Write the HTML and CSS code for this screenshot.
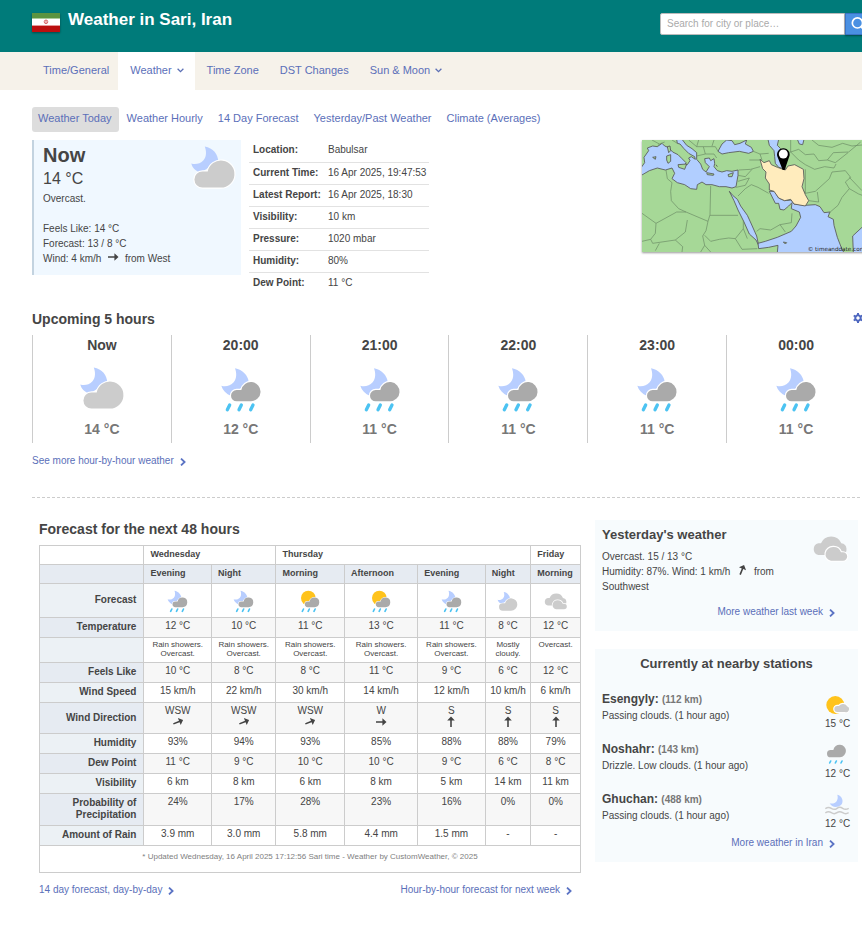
FILE: index.html
```html
<!DOCTYPE html>
<html lang="en">
<head>
<meta charset="utf-8">
<title>Weather in Sari, Iran</title>
<meta name="viewport" content="width=device-width, initial-scale=1">
<link rel="stylesheet" href="styles.css">
</head>
<body>
<svg class="sprite" aria-hidden="true">
  <defs>
    <symbol id="moon-cloud" viewBox="0 0 140 136">
      <path fill="#b8ceff" d="M45 4C70 8 86 28 86 50L32 84C16 78 7 69 4 56C16 60 31 57 41 46C51 34 50 18 45 4Z"/>
      <path class="cloud" fill="#ccc" d="M38 129A24.5 24.5 0 0 1 38 80H54A41 41 0 1 1 94 129Z"/>
    </symbol>
    <symbol id="moon-rain" viewBox="0 0 126 138">
      <path fill="#b8ceff" d="M45 4C68 8 84 26 86 44L34 87C18 80 8 70 4 56C16 60 31 57 41 46C51 34 50 18 45 4Z"/>
      <path class="cloud" fill="#aaa" d="M50 103A17 17 0 0 1 50 69H64A29 29 0 1 1 93 103Z"/>
      <path class="drops" d="M29 114L22 128M64 114L57 128M99 114L92 128"/>
    </symbol>
    <symbol id="sun-rain" viewBox="0 0 126 138">
      <circle cx="50" cy="48" r="44" fill="#ffc31c"/>
      <path class="cloud" fill="#aaa" d="M46 103A17 17 0 0 1 46 69H58A29 29 0 1 1 87 103Z"/>
      <path class="drops" d="M21 114L14 128M56 114L49 128M91 114L84 128"/>
    </symbol>
    <symbol id="overcast" viewBox="0 0 114 90">
      <path fill="#ccc" d="M22 66A18 18 0 0 1 22 31H30A33 33 0 0 1 91 31A18 18 0 0 1 94 66Z"/>
      <path class="cloud" fill="#ccc" d="M60 83A19 19 0 0 1 44 60A24 24 0 0 1 90 58H96A12.500 12.500 0 0 1 96 83Z"/>
    </symbol>
    <symbol id="sun-cloud" viewBox="0 0 72 60">
      <circle cx="31" cy="30" r="27" fill="#ffc31c"/>
      <path class="cloud" fill="#ccc" d="M37 51A9 9 0 0 1 37 33H42A14 14 0 0 1 66 34A9 9 0 0 1 60 51Z"/>
    </symbol>
    <symbol id="drizzle" viewBox="0 0 72 66">
      <path fill="#aaa" d="M17 40A11 11 0 0 1 17 18H25A19 19 0 1 1 45 40Z"/>
      <path class="drops small" d="M17 51L14 57M34 51L31 57M51 51L48 57"/>
    </symbol>
    <symbol id="moon-fog" viewBox="0 0 72 66">
      <path fill="#b8ceff" d="M37 2C51 5 58 22 48 33C38 42 20 41 14 28C30 32 42 20 37 2Z"/>
      <path fill="none" stroke="#ccc" stroke-width="4.500" d="M1 44Q10 37 19 43T36 43T53 43T71 43M1 57Q10 50 19 56T36 56T53 56T71 56"/>
    </symbol>
    <symbol id="arrow" viewBox="0 0 12 12"><path fill="#444" d="M1 5.200H7.400V2.200L11.500 6L7.400 9.800V6.800H1Z"/></symbol>
    <symbol id="chevron" viewBox="0 0 6 8"><path fill="none" stroke="#5b73c4" stroke-width="1.800" d="M1 .6L4.600 4L1 7.400"/></symbol>
    <symbol id="caret" viewBox="0 0 7 5"><path fill="none" stroke="#5b6fb5" stroke-width="1.300" d="M.6 .8L3.500 3.600L6.400 .8"/></symbol>
  </defs>
</svg>

<header class="banner">
  <div class="banner-title">
    <svg class="flag" viewBox="0 0 28 19" role="img" aria-label="Flag of Iran">
      <path fill="#fff" d="M0 0H28V19H0Z"/><path fill="#5b9440" d="M0 0H28V5H0Z"/><path fill="#bb0f0f" d="M0 12H28V19H0Z"/>
      <path fill="#a9cc9c" d="M0 5H28V6H0Z"/><path fill="#e49a9a" d="M0 12H28V13H0Z"/>
      <circle cx="14" cy="8.800" r="1.800" fill="none" stroke="#d9686a"/><path stroke="#d9686a" d="M14 7V11"/>
    </svg>
    <h1>Weather in Sari, Iran</h1>
  </div>
  <form class="search">
    <input type="text" aria-label="Search for city or place" placeholder="Search for city or place…">
    <button type="button" aria-label="Search"><svg viewBox="0 0 16 16"><circle cx="7" cy="6.500" r="4.800" fill="none" stroke="#fff" stroke-width="1.600"/><path stroke="#fff" stroke-width="2" d="M10.500 10L14 13.500"/></svg></button>
  </form>
</header>

<nav class="tabs">
  <a href="#">Time/General</a>
  <a href="#" class="active has-menu">Weather<svg class="caret"><use href="#caret"/></svg></a>
  <a href="#">Time Zone</a>
  <a href="#">DST Changes</a>
  <a href="#" class="has-menu">Sun &amp; Moon<svg class="caret"><use href="#caret"/></svg></a>
</nav>

<main class="page">
  <nav class="subtabs">
    <a href="#" class="current">Weather Today</a>
    <a href="#">Weather Hourly</a>
    <a href="#">14 Day Forecast</a>
    <a href="#">Yesterday/Past Weather</a>
    <a href="#">Climate (Averages)</a>
  </nav>

  <section class="summary">
    <div class="now">
      <div>
        <h2>Now</h2>
        <div class="now-temp">14 °C</div>
        <p>Overcast.</p>
        <p class="now-details">Feels Like: 14 °C<br>Forecast: 13 / 8 °C<br>Wind: 4 km/h <svg class="arrow inline"><use href="#arrow"/></svg> from West</p>
      </div>
      <svg class="now-icon"><use href="#moon-cloud"/></svg>
    </div>
    <table class="facts">
      <tr><th scope="row">Location:</th><td>Babulsar</td></tr>
      <tr><th scope="row">Current Time:</th><td>16 Apr 2025, 19:47:53</td></tr>
      <tr><th scope="row">Latest Report:</th><td>16 Apr 2025, 18:30</td></tr>
      <tr><th scope="row">Visibility:</th><td>10 km</td></tr>
      <tr><th scope="row">Pressure:</th><td>1020 mbar</td></tr>
      <tr><th scope="row">Humidity:</th><td>80%</td></tr>
      <tr><th scope="row">Dew Point:</th><td>11 °C</td></tr>
    </table>
    <svg class="map" viewBox="30 24 672 336" role="img" aria-label="Location of Sari, Iran">
      <path fill="#a6d897" d="M30 24H702V360H30Z"/>
      <g fill="#b1ceff" stroke="#555" stroke-width="2.500" stroke-linejoin="round">
        <path d="M28 106L38 92L36 76L50 56L46 48L62 42L76 44L90 34L98 42L108 46L122 60L138 68L150 80L162 92L158 100L166 98L174 86L170 78L178 74L190 82L188 74L170 64L156 50L144 36L136 34L134 22H150L164 40L180 50L194 62L194 82L206 96L212 112L222 120L232 104L220 92L218 80L232 78L236 86L246 80L248 94L246 104L256 116L270 120L284 116L300 118L318 114V130L312 164L300 168L282 164L262 164L240 158L222 158L210 150L196 158L194 172L176 170L158 158L136 152L120 140L128 124L120 108L100 114L76 108L52 116L28 130Z"/>
        <path d="M258 58L270 36L284 24L300 26L308 38L324 34L344 24L340 36L358 46L364 58L350 64L322 58L290 62L270 66Z"/>
        <path d="M408 22L412 40L426 56L428 74L430 94L440 106L460 112L456 94L450 76L440 60L446 50L436 40L440 22Z"/>
        <path d="M496 22L502 36L512 38L516 22Z"/>
        <path d="M302 190L316 202L326 222L346 250L358 276L374 312L380 340L372 324L352 306L336 270L318 234L306 206L292 178Z"/>
        <path d="M378 334L400 328L436 316L478 298L492 282L506 256L502 240L478 230L480 212L470 222L456 234L444 232L440 214L430 214L412 178L428 178L440 198L458 206L478 204L486 216L520 220L550 218L564 224L576 242L594 240L588 254L604 262L606 280L616 316L630 352L636 362H436L438 340L410 346L380 350Z"/>
        <path d="M704 276L690 286L662 312L664 362H704Z"/>
      </g>
      <g fill="#a6d897" stroke="#555" stroke-width="2.500">
        <path d="M106 44L114 42L116 56L110 62ZM104 72L116 68L116 88L108 94L104 84ZM138 98L164 96L158 112L140 106ZM224 122L246 126L244 130L226 128ZM288 128L304 122L300 134L290 134ZM62 76L72 74L70 82ZM454 330L464 332L460 336ZM252 98L256 104"/>
      </g>
      <path fill="none" stroke="#6a8a63" stroke-width="2" stroke-linejoin="round" d="M102 114L106 140L120 152L116 178L118 206L140 230L162 240L228 268L234 248L236 162M234 250H318M30 244L72 274L134 240L162 240M72 274L70 304L56 322L62 334L130 324L160 300L166 264M56 322L30 328M70 356L82 334M130 324L152 344L150 360M228 268L222 296L212 312L218 340L206 360M218 310L236 328L262 322L290 318L310 320L334 290L334 266M334 290L346 320M310 320L330 352L376 350M218 340L236 360M320 114L356 112L384 104M318 130L340 134L360 112M312 166L340 160L352 138L318 148M318 192L340 170L358 158L378 166L410 184M374 298L384 290L416 294L444 278L478 272L480 244M444 278L460 300M352 84L388 84M364 58L384 66L410 64M384 66L390 84M200 24L194 44L214 44L220 66L194 72M214 44L250 44L258 58M220 66L246 66L254 78M170 24L194 44M60 24L82 36L98 30M82 36L76 44M246 24L240 42M120 24L136 34M452 64L476 60L500 52L520 68L546 66L560 86L586 84L610 92M476 24V60M476 60L500 84L520 98L548 112L578 104L606 108L612 96M520 112L520 184L550 178L570 160L592 140L600 120L640 116M530 206L560 210L556 180M512 172L520 184M540 24L560 40L600 46L632 34L660 42L700 38M586 84L604 62L650 60L686 30M610 92L648 62M640 116L656 136L640 150L652 170L630 196L618 220L590 244M652 136L690 176L702 172M652 170L680 186L702 194"/>
      <path fill="#ffecbd" stroke="#555" stroke-width="2.500" stroke-linejoin="round" d="M384 82L396 92L412 86L418 98L436 106L460 114L468 102L488 98L514 112L516 140L510 164L520 188L530 206L520 222L486 216L476 202L458 206L440 198L426 178L412 174L412 156L400 138L402 120L392 110Z"/>
      <path d="M452 114L437 76A19 19 0 1 1 471 76L458 114Z"/><circle cx="454" cy="66" r="13.500" fill="#fff"/>
      <text x="527" y="357" class="map-credit">© timeanddate.com</text>
    </svg>
  </section>

  <section class="upcoming">
    <div class="section-head">
      <h2>Upcoming 5 hours</h2>
      <button type="button" class="gear" aria-label="Settings"><svg viewBox="0 0 10 10"><path fill="none" stroke="#4f68c0" stroke-width="2" d="M5 2.300A2.700 2.700 0 1 1 4.990 2.300Z"/><path stroke="#4f68c0" stroke-width="2" d="M5 0V2M5 8V10M.7 2.500L2.400 3.500M7.600 6.500L9.300 7.500M.7 7.500L2.400 6.500M7.600 3.500L9.300 2.500"/></svg></button>
    </div>
    <div class="hours">
      <div class="hour"><h3>Now</h3><svg class="big-cloud"><use href="#moon-cloud"/></svg><span>14 °C</span></div>
      <div class="hour"><h3>20:00</h3><svg><use href="#moon-rain"/></svg><span>12 °C</span></div>
      <div class="hour"><h3>21:00</h3><svg><use href="#moon-rain"/></svg><span>11 °C</span></div>
      <div class="hour"><h3>22:00</h3><svg><use href="#moon-rain"/></svg><span>11 °C</span></div>
      <div class="hour"><h3>23:00</h3><svg><use href="#moon-rain"/></svg><span>11 °C</span></div>
      <div class="hour"><h3>00:00</h3><svg><use href="#moon-rain"/></svg><span>11 °C</span></div>
    </div>
    <a class="more" href="#">See more hour-by-hour weather<svg><use href="#chevron"/></svg></a>
  </section>

  <div class="columns">
    <section class="forecast">
      <h2>Forecast for the next 48 hours</h2>
      <table class="grid">
        <colgroup><col class="w-label"><col class="w-a"><col class="w-b"><col class="w-c"><col class="w-d"><col class="w-a"><col class="w-e"><col class="w-f"></colgroup>
        <thead>
          <tr class="days"><td></td><th colspan="2">Wednesday</th><th colspan="4">Thursday</th><th>Friday</th></tr>
          <tr class="parts"><td></td><th>Evening</th><th>Night</th><th>Morning</th><th>Afternoon</th><th>Evening</th><th>Night</th><th>Morning</th></tr>
        </thead>
        <tbody>
          <tr class="icons"><th scope="row">Forecast</th><td><svg><use href="#moon-rain"/></svg></td><td><svg><use href="#moon-rain"/></svg></td><td><svg><use href="#sun-rain"/></svg></td><td><svg><use href="#sun-rain"/></svg></td><td><svg><use href="#moon-rain"/></svg></td><td><svg><use href="#moon-cloud"/></svg></td><td><svg class="wide"><use href="#overcast"/></svg></td></tr>
          <tr><th scope="row">Temperature</th><td>12 °C</td><td>10 °C</td><td>11 °C</td><td>13 °C</td><td>11 °C</td><td>8 °C</td><td>12 °C</td></tr>
          <tr class="desc"><th scope="row" aria-label="Description"></th><td>Rain showers. Overcast.</td><td>Rain showers. Overcast.</td><td>Rain showers. Overcast.</td><td>Rain showers. Overcast.</td><td>Rain showers. Overcast.</td><td>Mostly cloudy.</td><td>Overcast.</td></tr>
          <tr><th scope="row">Feels Like</th><td>10 °C</td><td>8 °C</td><td>8 °C</td><td>11 °C</td><td>9 °C</td><td>6 °C</td><td>12 °C</td></tr>
          <tr><th scope="row">Wind Speed</th><td>15 km/h</td><td>22 km/h</td><td>30 km/h</td><td>14 km/h</td><td>12 km/h</td><td>10 km/h</td><td>6 km/h</td></tr>
          <tr class="wind"><th scope="row">Wind Direction</th><td>WSW<svg class="arrow wsw"><use href="#arrow"/></svg></td><td>WSW<svg class="arrow wsw"><use href="#arrow"/></svg></td><td>WSW<svg class="arrow wsw"><use href="#arrow"/></svg></td><td>W<svg class="arrow"><use href="#arrow"/></svg></td><td>S<svg class="arrow s"><use href="#arrow"/></svg></td><td>S<svg class="arrow s"><use href="#arrow"/></svg></td><td>S<svg class="arrow s"><use href="#arrow"/></svg></td></tr>
          <tr><th scope="row">Humidity</th><td>93%</td><td>94%</td><td>93%</td><td>85%</td><td>88%</td><td>88%</td><td>79%</td></tr>
          <tr><th scope="row">Dew Point</th><td>11 °C</td><td>9 °C</td><td>10 °C</td><td>10 °C</td><td>9 °C</td><td>6 °C</td><td>8 °C</td></tr>
          <tr><th scope="row">Visibility</th><td>6 km</td><td>8 km</td><td>6 km</td><td>8 km</td><td>5 km</td><td>14 km</td><td>11 km</td></tr>
          <tr class="prob"><th scope="row">Probability of Precipitation</th><td>24%</td><td>17%</td><td>28%</td><td>23%</td><td>16%</td><td>0%</td><td>0%</td></tr>
          <tr><th scope="row">Amount of Rain</th><td>3.9 mm</td><td>3.0 mm</td><td>5.8 mm</td><td>4.4 mm</td><td>1.5 mm</td><td>-</td><td>-</td></tr>
        </tbody>
        <tfoot><tr><td colspan="8">* Updated Wednesday, 16 April 2025 17:12:56 Sari time - Weather by CustomWeather, © 2025</td></tr></tfoot>
      </table>
      <div class="forecast-links">
        <a class="more" href="#">14 day forecast, day-by-day<svg><use href="#chevron"/></svg></a>
        <a class="more" href="#">Hour-by-hour forecast for next week<svg><use href="#chevron"/></svg></a>
      </div>
    </section>

    <aside class="side">
      <section class="card yesterday">
        <div class="yesterday-body">
          <div>
            <h3>Yesterday's weather</h3>
            <p>Overcast. 15 / 13 °C</p>
            <p>Humidity: 87%. Wind: 1 km/h <svg class="arrow inline ssw"><use href="#arrow"/></svg> from Southwest</p>
          </div>
          <svg class="yesterday-icon"><use href="#overcast"/></svg>
        </div>
        <a class="more" href="#">More weather last week<svg><use href="#chevron"/></svg></a>
      </section>
      <section class="card nearby">
        <h3>Currently at nearby stations</h3>
        <div class="station"><div><h4>Esengyly: <small>(112 km)</small></h4><p>Passing clouds. (1 hour ago)</p></div><div class="reading"><svg><use href="#sun-cloud"/></svg>15 °C</div></div>
        <div class="station"><div><h4>Noshahr: <small>(143 km)</small></h4><p>Drizzle. Low clouds. (1 hour ago)</p></div><div class="reading"><svg><use href="#drizzle"/></svg>12 °C</div></div>
        <div class="station"><div><h4>Ghuchan: <small>(488 km)</small></h4><p>Passing clouds. (1 hour ago)</p></div><div class="reading"><svg><use href="#moon-fog"/></svg>12 °C</div></div>
        <a class="more" href="#">More weather in Iran<svg><use href="#chevron"/></svg></a>
      </section>
    </aside>
  </div>
</main>
</body>
</html>
```
FILE: styles.css
```css
* { box-sizing: border-box; }
body { margin: 0; overflow-x: hidden; background: #fff; color: #454545; font: 10px/15px "Liberation Sans", Arial, sans-serif; }
h1, h2, h3, h4, p { margin: 0; }
h2 { font-size: 14px; line-height: 18px; }
svg { display: block; }
a { color: #5b6fb9; text-decoration: none; }
.sprite { position: absolute; width: 0; height: 0; }
.cloud { stroke: #fff; stroke-width: 7px; paint-order: stroke; }
.drops { fill: none; stroke: #4cc3f2; stroke-width: 10px; stroke-linecap: round; }
.drops.small { stroke-width: 5px; }
.arrow { width: 12px; height: 12px; }
.wsw { transform: rotate(-22deg); }
.ssw { transform: rotate(-68deg); }
.s { transform: rotate(-90deg); }
.inline { display: inline-block; margin: 0 3px; vertical-align: -1px; }

.banner { display: flex; justify-content: space-between; height: 52px; margin-right: -10px; padding-left: 32px; background: #007b7a; }
.banner-title { display: flex; gap: 8px; padding-top: 10px; }
.banner h1 { color: #fff; font-size: 17px; line-height: 20px; }
.flag { width: 28px; height: 19px; margin-top: 3px; box-shadow: 0 1px 2px #0006; }
.search { display: flex; height: 22px; margin-top: 13px; }
.search input { width: 185px; padding: 0 6px 1px; border: 1px solid #bbb; border-radius: 2px 0 0 2px; color: #444; font: 10px "Liberation Sans", Arial, sans-serif; }
.search input::placeholder { color: #aaa; }
.search button { width: 27px; padding: 0 4px; border: 1px solid #3a73c4; border-radius: 0 2px 2px 0; background: #4a90e2; box-shadow: 0 1px 2px #0006; }
.search button svg { width: 17px; height: 17px; }

.tabs { display: flex; height: 38px; padding-left: 31px; background: #f6f2ea; font-size: 11px; line-height: 36px; }
.tabs a { display: flex; align-items: center; padding: 0 9px 2px 12px; height: 38px; }
.tabs .has-menu { gap: 5px; padding-right: 11px; }
.tabs .active { background: #fff; }
.caret { width: 7px; height: 5px; }

.page { margin: 0 -3px 0 32px; padding-top: 17px; }
.subtabs { display: flex; gap: 2px; font-size: 11px; line-height: 23px; }
.subtabs a { height: 25px; padding: 0 7px 0 6px; border-radius: 3px; }
.subtabs .current { background: #ddd; }

.summary { display: flex; align-items: flex-start; margin-top: 8px; }
.now { display: flex; justify-content: space-between; width: 209px; height: 135px; padding: 3px 5px 0 9px; border-left: 2px solid #c3d3e0; background: #f0f8ff; }
.now h2 { font-size: 20px; line-height: 24px; }
.now-temp { font-size: 16px; line-height: 24px; }
.now-details { margin-top: 15px; }
.now-icon { width: 46px; height: 45px; margin-top: 2px; flex: none; }
.now .cloud { stroke: #f0f8ff; }
.facts { width: 180px; margin-left: 8px; border-collapse: collapse; }
.facts th, .facts td { height: 22px; padding: 0 0 0 4px; border-bottom: 1px solid #e2e2e2; text-align: left; line-height: 19px; white-space: nowrap; vertical-align: top; }
.facts th { width: 75px; }
.facts tr:last-child > * { border-bottom: 0; }
.map { width: 224px; height: 112px; margin: 0 -1px 0 auto; box-shadow: 0 1px 2px #0006; }
.map-credit { font: 17px "DejaVu Sans", sans-serif; fill: #222; }

.upcoming { margin-top: 15px; padding-bottom: 29px; border-bottom: 1px dashed #ccc; }
.section-head { display: flex; justify-content: space-between; align-items: flex-start; height: 26px; }
.section-head h2 { line-height: 20px; }
.gear { width: 10px; height: 10px; margin: 4px 2px 0 0; padding: 0; border: 0; background: none; }
.hours { display: grid; grid-template-columns: repeat(6, minmax(0, 1fr)); height: 108px; }
.hour { display: flex; flex-direction: column; align-items: center; border-left: 1px solid #ccc; color: #777; font-size: 14px; font-weight: bold; line-height: 20px; }
.hour h3 { color: #454545; font-size: 14px; line-height: 20px; }
.hour svg { width: 42px; height: 46px; margin: 12px 0 6px; }
.hour .big-cloud { width: 46px; height: 45px; margin: 11px 0 8px; }
.upcoming > .more { margin-top: 10px; }
.more { display: flex; align-items: center; gap: 6px; font-size: 10px; line-height: 15px; }
.more svg { width: 6px; height: 8px; margin-top: 2px; }

.columns { display: grid; grid-template-columns: minmax(0, 542fr) minmax(0, 263fr); gap: 14px; padding: 22px 7px 30px; }
.forecast h2 { margin-bottom: 7px; line-height: 18px; }
.grid { width: 100%; border-collapse: collapse; table-layout: fixed; }
.grid th, .grid td { height: 20px; padding: 0; border: 1px solid #ccc; text-align: center; vertical-align: top; line-height: 16px; }
.w-label { width: 19.3%; } .w-a { width: 12.5%; } .w-b { width: 11.9%; } .w-c { width: 12.7%; } .w-d { width: 13.5%; } .w-e { width: 8.4%; } .w-f { width: 9.2%; }
.grid thead th { height: 19px; padding-left: 6px; text-align: left; font-size: 9px; }
.grid thead td { height: 19px; }
.grid .parts > * { background: #e6ebf2; }
.grid tbody th { padding: 0 7px 1px 0; text-align: right; vertical-align: middle; line-height: 12px; background: #ecf1f5; }
.grid tbody tr:nth-child(even) th { background: #e6ebf2; }
.grid tbody tr:nth-child(even) td { background: #f7f7f7; }
.grid .icons td { height: 34px; vertical-align: middle; }
.icons svg { width: 21px; height: 23px; margin: 1px auto 0; }
.icons .wide { width: 25px; height: 20px; }
.grid .desc td { height: 25px; padding: 2px 4px 0; font-size: 8px; line-height: 9px; }
.grid .wind td { height: 31px; line-height: 15px; }
.wind svg { margin: -2px auto 0; }
.grid .prob td { height: 32px; }
.grid tfoot td { height: 27px; color: #808080; font-size: 8px; line-height: 21px; }
.forecast-links { display: flex; justify-content: space-between; padding: 9px 9px 0 0; }

.card { padding: 0 7px; background: #f7fbfd; }
.card .cloud { stroke: #f7fbfd; }
.card h3 { font-size: 13px; line-height: 20px; }
.card .more { justify-content: flex-end; padding-right: 16px; }
.yesterday { height: 111px; padding-top: 5px; }
.yesterday-body { display: flex; gap: 4px; margin-bottom: 10px; }
.yesterday-body > div { flex: 1; }
.yesterday h3 { margin-bottom: 4px; }
.yesterday-icon { flex: none; width: 38px; height: 30px; margin: 8px 2px 0 0; }
.nearby { height: 213px; margin-top: 18px; padding-top: 5px; }
.nearby h3 { margin-bottom: 17px; text-align: center; }
.station { display: flex; justify-content: space-between; height: 50px; }
.station:last-of-type { height: 44px; }
.station h4 { font-size: 12px; line-height: 17px; }
.station small { color: #777; font-size: 10px; }
.reading { display: flex; flex-direction: column; width: 26px; padding-top: 3px; white-space: nowrap; line-height: 16px; }
.reading svg { width: 24px; height: 22px; }
```
